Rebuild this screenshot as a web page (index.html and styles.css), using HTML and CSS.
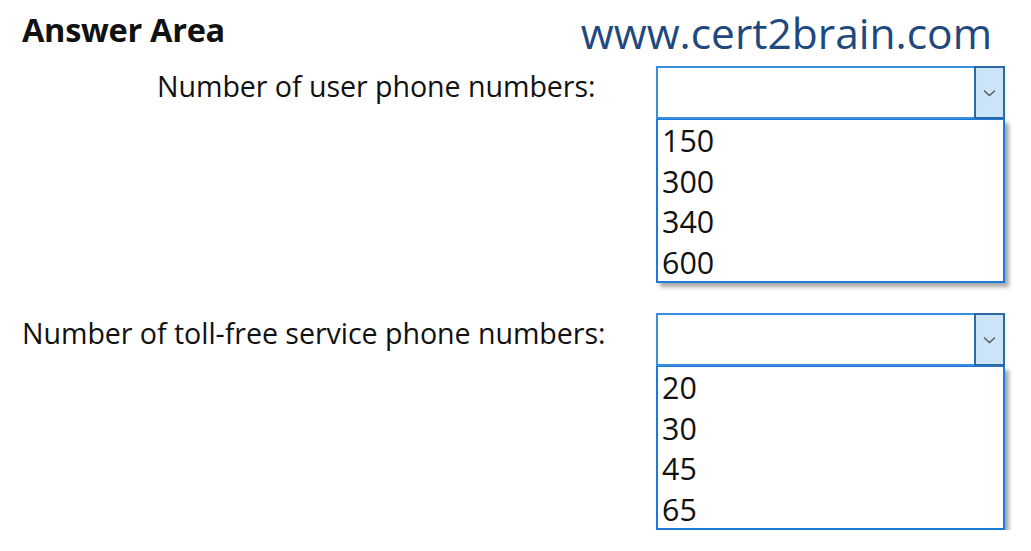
FILE: index.html
```html
<!DOCTYPE html>
<html lang="en">
<head>
  <meta charset="UTF-8" />
  <meta name="viewport" content="width=device-width, initial-scale=1.0" />
  <title>Answer Area</title>
  <link rel="stylesheet" href="styles.css">
</head>
<body>
  <div class="page">
    <div class="header">
      <h1 class="title">Answer Area</h1>
      <div class="site">www.cert2brain.com</div>
    </div>

    <div class="row first">
      <div class="label indent">Number of user phone numbers:</div>
      <div class="combo">
        <div class="field">
          <span class="value"></span>
          <span class="button">
            <svg width="13" height="8" viewBox="0 0 13 8"><path d="M1 1.5 L6.5 6.5 L12 1.5" fill="none" stroke="#555" stroke-width="1.3"/></svg>
          </span>
        </div>
        <ul class="list">
          <li>150</li>
          <li>300</li>
          <li>340</li>
          <li>600</li>
        </ul>
      </div>
    </div>

    <div class="row second">
      <div class="label">Number of toll-free service phone numbers:</div>
      <div class="combo">
        <div class="field">
          <span class="value"></span>
          <span class="button">
            <svg width="13" height="8" viewBox="0 0 13 8"><path d="M1 1.5 L6.5 6.5 L12 1.5" fill="none" stroke="#555" stroke-width="1.3"/></svg>
          </span>
        </div>
        <ul class="list">
          <li>20</li>
          <li>30</li>
          <li>45</li>
          <li>65</li>
        </ul>
      </div>
    </div>
  </div>
</body>
</html>
```

FILE: styles.css
```css
html, body {
  margin: 0;
  background-color: #fff;
}

body {
  font-family: "Open Sans", "Noto Sans", sans-serif;
  color: #111;
}

.page {
  padding: 0 26px 0 22px;
}

.header {
  display: flex;
  justify-content: space-between;
  align-items: flex-start;
  height: 66px;
}

.title {
  margin: 8px 0 0 0;
  font-size: 32.5px;
  line-height: 44px;
  font-weight: 700;
  letter-spacing: -0.3px;
}

.site {
  margin-top: 5px;
  margin-right: 13px;
  font-size: 42.5px;
  line-height: 56px;
  color: #1f497d;
}

.row {
  display: grid;
  grid-template-columns: 634px 349px;
}

.second {
  margin-top: 30px;
}

.label {
  font-size: 28.6px;
  line-height: 38px;
  padding-top: 1px;
  letter-spacing: -0.05px;
}

.indent {
  padding-left: 135px;
}

.combo {
  width: 349px;
}

.field {
  display: flex;
  height: 53px;
  box-sizing: border-box;
  border: 2px solid #3a8ee0;
  background-color: #fff;
}

.value {
  flex: 1;
}

.button {
  width: 27px;
  display: flex;
  align-items: center;
  justify-content: center;
  background-color: #cce4f7;
  margin: -2px -2px -2px 0;
  border: 2px solid #2d6aa3;
}

.list {
  list-style: none;
  margin: 0;
  padding: 1px 0 0 0;
  height: 164px;
  box-sizing: border-box;
  border: 2px solid #1d7ad8;
  border-top-width: 1px;
  box-shadow: 4px 4px 4px rgba(0, 0, 0, 0.35);
}

.list li {
  font-size: 30.4px;
  line-height: 40.5px;
  padding-left: 4px;
  color: #111;
}
```
